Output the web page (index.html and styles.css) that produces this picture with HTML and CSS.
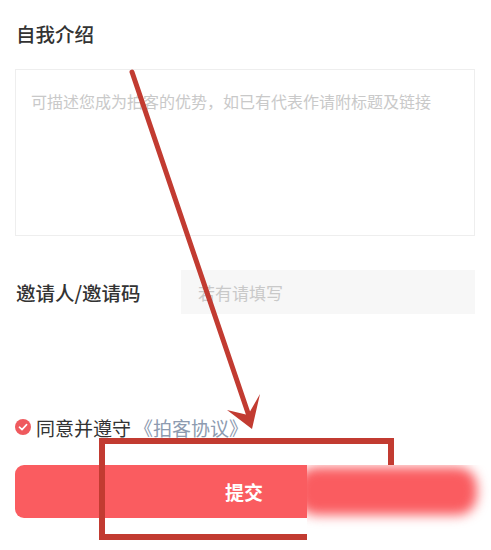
FILE: index.html
```html
<!DOCTYPE html>
<html lang="zh-CN">
<head>
  <meta charset="UTF-8">
  <meta name="viewport" content="width=device-width, initial-scale=1.0">
  <title>申请拍客</title>
  <link rel="stylesheet" href="styles.css">
</head>
<body>
  <div class="stranka">
    <p class="nadpis">自我介绍</p>

    <div class="popis">
      <span class="placeholder">可描述您成为拍客的优势，如已有代表作请附标题及链接</span>
    </div>

    <div class="pozvani">
      <span class="pozvani_label">邀请人/邀请码</span>
      <div class="pozvani_input">
        <span class="placeholder">若有请填写</span>
      </div>
    </div>

    <div class="souhlas">
      <svg class="fajfka" viewBox="0 0 16 16" width="16" height="16">
        <circle cx="8" cy="8" r="8" fill="#ef5a5e"/>
        <path d="M4.4 8.2 L7 10.6 L11.6 5.6" fill="none" stroke="#fff" stroke-width="1.6" stroke-linecap="round" stroke-linejoin="round"/>
      </svg>
      <span>同意并遵守</span>
      <span class="protokol">《拍客协议》</span>
    </div>

    <button class="odeslat">提交</button>
  </div>

  <!-- anotace: sipka a ramecek -->
  <svg class="anotace" viewBox="0 0 491 550" width="491" height="550">
    <line x1="132" y1="72" x2="249" y2="416" stroke="#c23b31" stroke-width="5" stroke-linecap="round"/>
    <polygon points="252,429 227,410 248,415 260,394" fill="#c23b31"/>
    <rect x="102" y="441" width="289" height="96" fill="none" stroke="#c23b31" stroke-width="6"/>
  </svg>

  <div class="rozmazani">
    <div class="rozmazani_cervena"></div>
  </div>
</body>
</html>
```

FILE: styles.css
```css
html, body {
  margin: 0;
  padding: 0;
  height: 100%;
}
body {
  background-color: #fff;
  font-family: "Noto Sans CJK SC", "Noto Sans", sans-serif;
  color: #333;
  position: relative;
  overflow: hidden;
}
.stranka {
  padding: 0 16px 0 15px;
  display: flex;
  flex-direction: column;
}
.nadpis {
  margin: 0;
  padding-top: 21px;
  padding-left: 1px;
  font-size: 19.5px;
  line-height: 26px;
  font-weight: 500;
}
.placeholder {
  color: #c9c9c9;
}
.popis {
  margin-top: 22px;
  border: 1px solid #eeeeee;
  padding: 20px 16px 0 15px;
  box-sizing: border-box;
  height: 167px;
  font-size: 16px;
  line-height: 22px;
}
.pozvani {
  margin-top: 34px;
  display: flex;
  align-items: center;
}
.pozvani_label {
  width: 165px;
  padding-left: 1px;
  font-size: 19.5px;
  font-weight: 500;
}
.pozvani_input {
  flex: 1;
  height: 44px;
  background-color: #f7f7f7;
  display: flex;
  align-items: center;
  padding-left: 17px;
  font-size: 17px;
}
.souhlas {
  margin-top: 101px;
  height: 24px;
  display: flex;
  align-items: center;
  font-size: 19px;
}
.fajfka {
  margin-right: 5px;
}
.protokol {
  color: #8d9bb0;
  margin-left: 3px;
}
.odeslat {
  margin-top: 26px;
  margin-right: 2px;
  height: 53px;
  border: none;
  border-radius: 9px;
  background-color: #fa5c60;
  color: #fff;
  font-family: inherit;
  font-size: 19px;
  font-weight: bold;
  cursor: pointer;
}

.anotace {
  position: absolute;
  left: 0;
  top: 0;
  pointer-events: none;
}
.rozmazani {
  position: absolute;
  left: 307px;
  top: 465px;
  width: 184px;
  height: 85px;
  background-color: #fff;
  overflow: hidden;
}
.rozmazani_cervena {
  position: absolute;
  left: -10px;
  top: 2px;
  width: 180px;
  height: 48px;
  border-radius: 20px;
  background-color: #fa5c60;
  filter: blur(6px);
}
```
